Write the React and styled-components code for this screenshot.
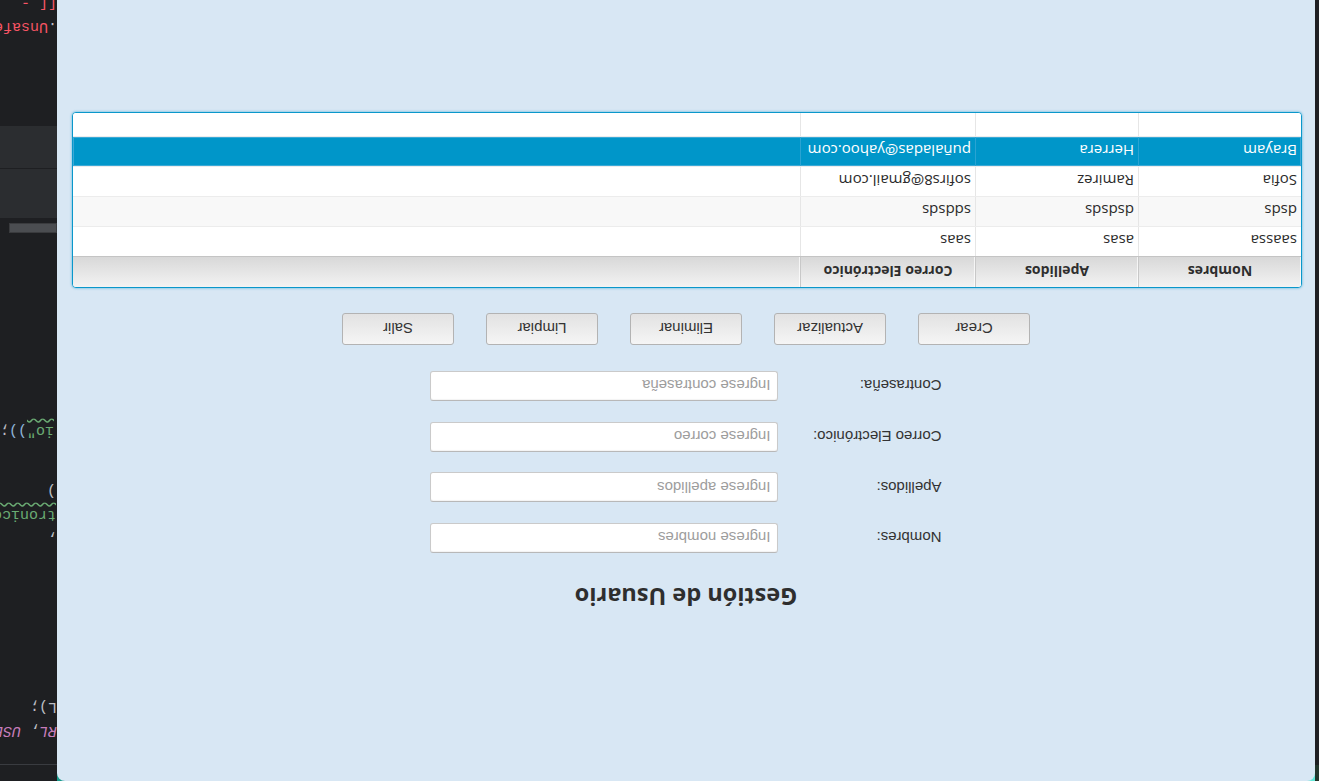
import React from 'react'
import styled, { createGlobalStyle } from 'styled-components'

const GlobalStyle = createGlobalStyle`
    html, body {
        margin: 0;
        padding: 0;
        background: #1e1f22;
        overflow: hidden;
    }
`

// the whole capture is upside down, so the desktop is laid out normally and turned
const Desktop = styled.div`
    width: 1319px;
    height: 781px;
    display: flex;
    background: #1e1f22;
    overflow: hidden;
    transform: rotate(180deg);
`

const SideStrip = styled.div`
    width: 4px;
    flex: none;
    background: linear-gradient(to bottom, #22352b 0 16px, #1e1f22 16px);
`

const WindowSlot = styled.div`
    width: 1258px;
    flex: none;
    background:
        linear-gradient(90deg, #62e8d8 0 12px, transparent 12px, transparent calc(100% - 12px), #17998a calc(100% - 12px)) top / 100% 10px no-repeat;
`

const Window = styled.div`
    height: 100%;
    box-sizing: border-box;
    background: #d8e7f4;
    border-radius: 8px 8px 0 0;
    display: flex;
    flex-direction: column;
    align-items: center;
`

const Title = styled.h1`
    margin: 168px 0 0;
    height: 32px;
    font-family: "Open Sans", "Noto Sans", sans-serif;
    font-size: 23.5px;
    line-height: 32px;
    font-weight: 700;
    color: #2e2e2e;
`

const Form = styled.div`
    margin-top: 28px;
    display: grid;
    grid-template-columns: 163px 348px;
    grid-auto-rows: 30px;
    row-gap: 20.7px;
`

const Label = styled.label`
    align-self: center;
    font-family: "Liberation Sans", Arial, sans-serif;
    font-size: 15px;
    color: #333;
`

const Input = styled.input`
    box-sizing: border-box;
    width: 348px;
    height: 30px;
    padding: 0 7px;
    border: 1px solid #cacaca;
    border-top-color: #b8b8b8;
    border-radius: 3px;
    background: #fff;
    box-shadow: inset 0 1px 1px rgba(0, 0, 0, 0.05);
    font-family: "Liberation Sans", Arial, sans-serif;
    font-size: 15px;
    color: #333;
    outline: none;

    &::placeholder {
        color: #9d9d9d;
    }
`

const ButtonRow = styled.div`
    margin-top: 26px;
    display: flex;
    gap: 32px;
`

const Button = styled.button`
    box-sizing: border-box;
    width: 112px;
    height: 32px;
    padding: 0;
    border: 1px solid #b3b3b3;
    border-radius: 3px;
    background: linear-gradient(to bottom, #f5f5f5, #e2e2e2);
    font-family: "Liberation Sans", Arial, sans-serif;
    font-size: 15px;
    color: #333;
`

const Table = styled.div`
    align-self: stretch;
    margin: 25px 15px 0 13px;
    height: 176px;
    box-sizing: border-box;
    border: 1px solid #0a97cb;
    border-radius: 4px;
    box-shadow: 0 0 2px 1px rgba(0, 150, 201, 0.3);
    background: #fff;
    overflow: hidden;
    font-family: "Open Sans", "Noto Sans", sans-serif;
`

const HeaderRow = styled.div`
    display: grid;
    grid-template-columns: 163px 163px 175px 1fr;
    height: 31px;
    box-sizing: border-box;
    border-bottom: 1px solid #c4c4c4;
    background: linear-gradient(to bottom, #f3f3f3, #d8d8d8);
`

const HeaderCell = styled.div`
    border-right: 1px solid #c8c8c8;
    box-shadow: inset 1px 0 0 rgba(255, 255, 255, 0.7);
    display: flex;
    align-items: center;
    justify-content: center;
    font-size: 14px;
    font-weight: 700;
    color: #2e2e2e;

    &:last-child {
        border-right: none;
    }
`

const Row = styled.div`
    display: grid;
    grid-template-columns: 163px 163px 175px 1fr;
    height: 30px;
    box-sizing: border-box;
    border-bottom: 1px solid #ececec;
    background: ${p => (p.$selected ? '#0096c9' : p.$odd ? '#f8f8f8' : '#fff')};
    box-shadow: ${p => (p.$selected ? 'inset 0 0 0 1px #3aa9d6' : 'none')};
    color: ${p => (p.$selected ? '#fff' : '#2b2b2b')};
`

const Cell = styled.div`
    border-right: 1px solid ${p => (p.$selected ? '#2aa3d2' : '#e6e6e6')};
    padding-left: 4px;
    display: flex;
    align-items: center;
    font-size: 15px;
    white-space: nowrap;
    overflow: hidden;

    &:last-child {
        border-right: none;
    }
`

const Editor = styled.div`
    width: 57px;
    flex: none;
    display: flex;
    flex-direction: column;
    background: #1e1f22;
    overflow: hidden;
    font-family: "Liberation Mono", "DejaVu Sans Mono", monospace;
    font-size: 15px;
    color: #bcbec4;
`

const TabBar = styled.div`
    height: 16px;
    flex: none;
    border-bottom: 1px solid #393b40;
`

const CodeLine = styled.div`
    height: 24px;
    flex: none;
    line-height: 24px;
    white-space: pre;
    margin-top: ${p => p.$gap || 0}px;
    padding-left: ${p => p.$indent || 0}px;
`

const Const = styled.span`
    color: #c77dbb;
    font-style: italic;
`

const Str = styled.span`
    color: #6aab73;
    text-decoration: underline wavy #6aab73;
    text-underline-offset: 3px;
`

const Paren = styled.span`
    color: ${p => p.$tint || '#bcbec4'};
`

const Err = styled.span`
    color: #f75464;
`

const ScrollThumb = styled.div`
    width: 48px;
    height: 10px;
    flex: none;
    margin-top: 185px;
    background: #4b4d51;
    border: 1px solid #3a3b3e;
    box-sizing: border-box;
`

const ToolBand = styled.div`
    height: 92px;
    flex: none;
    margin-top: 5px;
    background: linear-gradient(to bottom, #2b2d30 0 49px, #1e1f22 49px 50px, #2b2d30 50px);
`

const rows = [
    ['saassa', 'asas', 'saas'],
    ['dsds', 'dsdsds', 'sddsds'],
    ['Sofia', 'Ramirez', 'sofirs8@gmail.com'],
    ['Brayam', 'Herrera', 'puñaladas@yahoo.com'],
    ['', '', ''],
]

const fields = [
    ['Nombres:', 'Ingrese nombres'],
    ['Apellidos:', 'Ingrese apellidos'],
    ['Correo Electrónico:', 'Ingrese correo'],
    ['Contraseña:', 'Ingrese contraseña'],
]

export default function App() {
    return (
        <>
            <GlobalStyle />
            <Desktop>
                <SideStrip />
                <WindowSlot>
                    <Window>
                        <Title>Gestión de Usuario</Title>
                        <Form>
                            {fields.map(([label, hint]) => (
                                <React.Fragment key={label}>
                                    <Label>{label}</Label>
                                    <Input placeholder={hint} />
                                </React.Fragment>
                            ))}
                        </Form>
                        <ButtonRow>
                            <Button>Crear</Button>
                            <Button>Actualizar</Button>
                            <Button>Eliminar</Button>
                            <Button>Limpiar</Button>
                            <Button>Salir</Button>
                        </ButtonRow>
                        <Table>
                            <HeaderRow>
                                <HeaderCell>Nombres</HeaderCell>
                                <HeaderCell>Apellidos</HeaderCell>
                                <HeaderCell>Correo Electrónico</HeaderCell>
                                <HeaderCell />
                            </HeaderRow>
                            {rows.map((r, i) => {
                                const selected = i === 3
                                return (
                                    <Row key={i} $odd={i % 2 === 1} $selected={selected}>
                                        {r.map((v, j) => (
                                            <Cell key={j} $selected={selected}>{v}</Cell>
                                        ))}
                                        <Cell $selected={selected} />
                                    </Row>
                                )
                            })}
                        </Table>
                    </Window>
                </WindowSlot>
                <Editor>
                    <TabBar />
                    <CodeLine $gap={22}><Const>RL</Const>, <Const>USER</Const></CodeLine>
                    <CodeLine>L);</CodeLine>
                    <CodeLine $gap={144} $indent={1}>,</CodeLine>
                    <CodeLine $indent={1}><Str>tronico</Str></CodeLine>
                    <CodeLine $indent={1}>)</CodeLine>
                    <CodeLine $gap={36} $indent={3}><Str>io"</Str><Paren $tint="#8fb3d9">))</Paren>;</CodeLine>
                    <ScrollThumb />
                    <ToolBand />
                    <CodeLine $gap={88}>.<Err>Unsafe</Err></CodeLine>
                    <CodeLine><Err>[[ -</Err></CodeLine>
                </Editor>
            </Desktop>
        </>
    )
}
